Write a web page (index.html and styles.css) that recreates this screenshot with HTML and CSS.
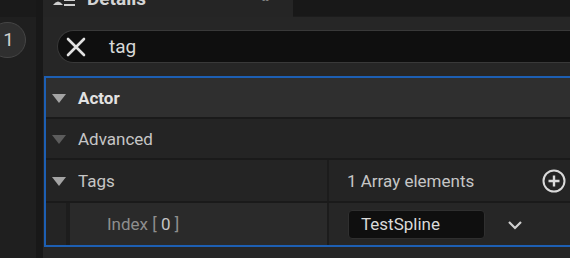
FILE: index.html
```html
<!DOCTYPE html>
<html>
<head>
	<title>Details</title>
	<meta charset="utf-8">
	<link rel="stylesheet" href="styles.css">
</head>
<body>
<div class="app">
	<div class="sidebar">
		<div class="sidebar-top"></div>
		<div class="count">1</div>
	</div>
	<div class="gutter"></div>
	<div class="panel">
		<div class="tabbar">
			<div class="tab">
				<svg class="tab-icon" width="24" height="20" viewBox="0 0 24 20">
					<circle cx="6" cy="8" r="3" fill="#cfcfcf"/>
					<path d="M1 18 Q6 11 11 18 Z" fill="#cfcfcf"/>
					<rect x="12" y="12" width="11" height="2" fill="#cfcfcf"/>
					<rect x="12" y="17" width="11" height="2" fill="#cfcfcf"/>
				</svg>
				<span class="tab-title">Details</span>
				<span class="tab-pin">&#8226;&#8226;</span>
			</div>
			<div class="tab-rest"></div>
		</div>
		<div class="search-wrap">
			<div class="search">
				<svg class="search-clear" width="20" height="20" viewBox="0 0 20 20">
					<path d="M2 2 L18 18 M18 2 L2 18" stroke="#e2e2e2" stroke-width="2.6" stroke-linecap="round"/>
				</svg>
				<span class="search-text">tag</span>
			</div>
		</div>
		<div class="details">
			<div class="row row-category">
				<span class="arrow"></span>
				<span class="label label-bold">Actor</span>
			</div>
			<div class="row">
				<span class="arrow arrow-dim"></span>
				<span class="label">Advanced</span>
			</div>
			<div class="row row-split">
				<div class="name">
					<span class="arrow"></span>
					<span class="label">Tags</span>
				</div>
				<div class="value">
					<span class="label">1 Array elements</span>
					<svg class="add" width="26" height="26" viewBox="0 0 26 26">
						<circle cx="13" cy="13" r="10.5" fill="none" stroke="#dadada" stroke-width="2"/>
						<path d="M13 7.5 V18.5 M7.5 13 H18.5" stroke="#dadada" stroke-width="2.4"/>
					</svg>
				</div>
			</div>
			<div class="row row-split row-child">
				<div class="name">
					<div class="indent"></div>
					<div class="child-name">
						<span class="index">Index <em>[ </em><b>0</b><em> ]</em></span>
					</div>
				</div>
				<div class="value">
					<div class="textbox">TestSpline</div>
					<svg class="chevron" width="16" height="10" viewBox="0 0 16 10">
						<path d="M2 2 L8 8 L14 2" fill="none" stroke="#d0d0d0" stroke-width="2.2"/>
					</svg>
				</div>
			</div>
		</div>
	</div>
</div>
</body>
</html>
```

FILE: styles.css
```css
body,div{margin:0;padding:0;}
body{
	background:#252525;
	font-family:Roboto,"Liberation Sans",sans-serif;
	color:#c6c6c6;
	width:570px;
	height:258px;
	overflow:hidden;
}

.app{
	display:flex;
	height:258px;
}

.sidebar{
	width:36px;
	background:#1f1f1f;
	display:flex;
	flex-direction:column;
}
.sidebar-top{
	height:17px;
	background:#1a1a1a;
}
.count{
	width:24px;
	height:34px;
	margin:5px 0 0 -11px;
	border:1px solid #454545;
	border-radius:18px;
	background:#2f2f2f;
	color:#cfcfcf;
	font-size:19px;
	line-height:34px;
	text-align:right;
	padding-right:11px;
	box-sizing:content-box;
}
.gutter{
	width:7px;
	background:#181818;
}

.panel{
	flex:1;
	background:#262626;
	display:flex;
	flex-direction:column;
}

.tabbar{
	height:17px;
	display:flex;
}
.tab{
	width:250px;
	background:#252525;
	display:flex;
	align-items:flex-end;
	overflow:hidden;
	position:relative;
}
.tab-icon{
	margin:0 0 10px 9px;
	flex:none;
}
.tab-title{
	margin-left:11px;
	font-size:19px;
	font-weight:700;
	color:#d4d4d4;
	line-height:19px;
	margin-bottom:9px;
}
.tab-pin{
	position:absolute;
	left:218px;
	top:-10px;
	font-size:16px;
	color:#8a8a8a;
	letter-spacing:-2px;
}
.tab-rest{
	flex:1;
	background:#181818;
	border-bottom:1px solid #1c1c1c;
}

.search-wrap{
	padding:13px 0 13px 14px;
}
.search{
	height:31px;
	border:1px solid #393939;
	border-right:none;
	border-radius:17px 0 0 17px;
	background:#0f0f0f;
	display:flex;
	align-items:center;
}
.search-clear{
	margin-left:8px;
}
.search-text{
	margin-left:23px;
	font-size:19px;
	color:#d8d8d8;
}

.details{
	margin-left:1px;
	border:2px solid #1d5fb3;
	border-right:none;
	display:flex;
	flex-direction:column;
	gap:2px;
	background:#1a1a1a;
}
.row{
	height:39px;
	background:#242424;
	display:flex;
	align-items:center;
	padding-left:6px;
}
.row-category{
	background:#2f2f2f;
}
.arrow{
	width:0;
	height:0;
	border-left:7px solid transparent;
	border-right:7px solid transparent;
	border-top:9px solid #a4a4a4;
	margin-right:12px;
	margin-top:2px;
}
.arrow-dim{
	border-top-color:#5c5c5c;
}
.label{
	font-size:17px;
	color:#c6c6c6;
}
.label-bold{
	font-weight:700;
	color:#e2e2e2;
}

.row-split{
	padding-left:0;
	height:41px;
	gap:2px;
	background:#1c1c1c;
	align-items:stretch;
}
.row-split .name{
	width:281px;
	background:#242424;
	display:flex;
	align-items:center;
	padding-left:6px;
	box-sizing:border-box;
}
.row-split .value{
	flex:1;
	background:#242424;
	display:flex;
	align-items:center;
	padding-left:18px;
}
.add{
	margin-left:auto;
	margin-right:3px;
}

.row-child{
	height:42px;
}
.row-child .name{
	padding-left:0;
	align-items:stretch;
}
.indent{
	width:20px;
	background:#242424;
	border-right:4px solid #1d1d1d;
}
.child-name{
	flex:1;
	background:#2a2a2a;
	display:flex;
	align-items:center;
	padding-left:37px;
}
.index{
	font-size:17px;
	color:#8e8e8e;
}
.index em{
	font-style:normal;
}
.index b{
	font-weight:400;
	color:#c4c4c4;
}
.row-child .value{
	background:#262626;
	padding-left:19px;
}
.textbox{
	width:123px;
	height:27px;
	padding-left:12px;
	border:1px solid #2f2f2f;
	border-radius:4px;
	background:#0f0f0f;
	color:#dadada;
	font-size:17px;
	line-height:26px;
}
.chevron{
	margin-left:22px;
	margin-top:2px;
}
```
